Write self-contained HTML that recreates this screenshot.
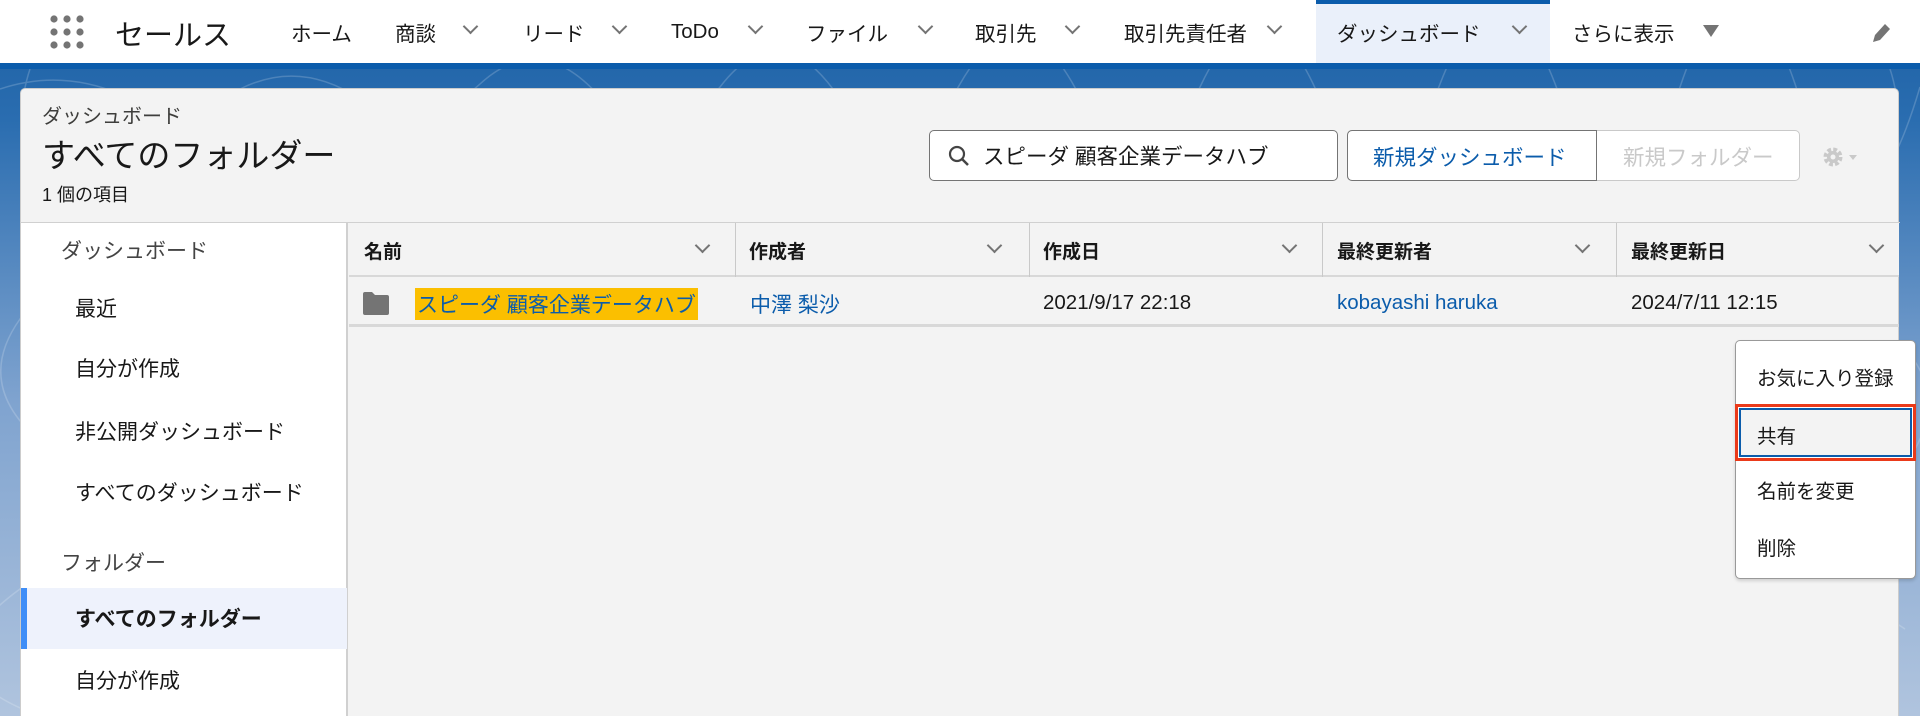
<!DOCTYPE html>
<html style="width:1920px;height:716px;overflow:hidden"><head><meta charset="utf-8"><style>
*{margin:0;padding:0;box-sizing:border-box}
body{width:1920px;height:716px;overflow:hidden;position:relative;font-family:"Liberation Sans","Noto Sans CJK JP",sans-serif;color:#181818;background:linear-gradient(180deg,#1b5fa3 0px,#2a6db0 120px,#7fa3cf 400px,#b0c4de 716px)}
.a{position:absolute;white-space:nowrap}
#nav{position:absolute;left:0;top:0;width:1920px;background:#fff;border-bottom:6px solid #0b5cab;height:69px}
.ni{font-size:20.5px;top:17px;color:#181818}
.chev{position:absolute;width:11px;height:11px;border-right:2px solid #747474;border-bottom:2px solid #747474;transform:rotate(45deg)}
#panel{position:absolute;left:20px;top:88px;width:1879px;height:628px;background:#f3f3f3;border-radius:5px 5px 0 0;border:1px solid #ccc;border-bottom:none}
.side{font-size:21px}
.th{font-size:19px;font-weight:bold;top:237px}
.td{font-size:20.5px;top:291px}
.blue{color:#0b5cab}
.mi{font-size:19.5px;left:1757px}
</style></head><body>
<svg class="a" style="left:0;top:69px" width="1920" height="647" opacity="0.18"><g fill="none" stroke="#fff" stroke-width="1.5">
<path d="M0 20 Q60 0 120 25 T240 20 T360 30 T480 15 T600 28 T720 18 T840 30 T960 15 T1080 28 T1200 18 T1320 30 T1440 15 T1560 28 T1680 18 T1800 30 T1920 18"/>
<path d="M30 0 Q10 60 40 120 T20 250 T50 380 T20 520 T40 647"/>
<path d="M1890 0 Q1910 60 1880 140 T1905 280 T1885 420 T1905 560"/>
</g></svg>
<div id="nav"></div>
<svg class="a" style="left:49px;top:14px" width="38" height="38"><g fill="#747474"><circle cx="5" cy="5" r="3.6"/><circle cx="18" cy="5" r="3.6"/><circle cx="31" cy="5" r="3.6"/><circle cx="5" cy="18" r="3.6"/><circle cx="18" cy="18" r="3.6"/><circle cx="31" cy="18" r="3.6"/><circle cx="5" cy="31" r="3.6"/><circle cx="18" cy="31" r="3.6"/><circle cx="31" cy="31" r="3.6"/></g></svg>
<div class="a" style="left:115px;top:12px;font-size:29px">セールス</div>
<div class="a" style="left:1316px;top:0;width:234px;height:63px;background:#eaf0fa;border-top:4px solid #0b5cab"></div>
<div class="a ni" style="left:291px">ホーム</div>
<div class="a ni" style="left:395px">商談</div><div class="chev" style="left:465px;top:21px"></div>
<div class="a ni" style="left:523px">リード</div><div class="chev" style="left:614px;top:21px"></div>
<div class="a ni" style="left:671px;top:20px">ToDo</div><div class="chev" style="left:750px;top:21px"></div>
<div class="a ni" style="left:806px">ファイル</div><div class="chev" style="left:920px;top:21px"></div>
<div class="a ni" style="left:975px">取引先</div><div class="chev" style="left:1067px;top:21px"></div>
<div class="a ni" style="left:1124px">取引先責任者</div><div class="chev" style="left:1269px;top:21px"></div>
<div class="a ni" style="left:1337px">ダッシュボード</div><div class="chev" style="left:1514px;top:21px"></div>
<div class="a ni" style="left:1572px">さらに表示</div>
<svg class="a" style="left:1703px;top:25px" width="16" height="12"><path d="M0 0H16L8 12Z" fill="#747474"/></svg>
<svg class="a" style="left:1870px;top:21px" width="22" height="24"><path d="M3 21L5 14L15 3L20 8L10 19Z" fill="#747474"/></svg>

<div id="panel"></div>
<div class="a" style="left:42px;top:100px;font-size:20px;color:#3e3e3c">ダッシュボード</div>
<div class="a" style="left:42px;top:129px;font-size:33px">すべてのフォルダー</div>
<div class="a" style="left:42px;top:181px;font-size:18px">1 個の項目</div>
<div class="a" style="left:929px;top:130px;width:409px;height:51px;background:#fff;border:1px solid #747474;border-radius:5px"></div>
<svg class="a" style="left:948px;top:145px" width="22" height="22"><circle cx="9" cy="9" r="7" fill="none" stroke="#444" stroke-width="2.2"/><path d="M14 14L20 20" stroke="#444" stroke-width="2.5"/></svg>
<div class="a" style="left:983px;top:140px;font-size:21.5px">スピーダ 顧客企業データハブ</div>
<div class="a" style="left:1347px;top:130px;width:453px;height:51px;background:#fff;border:1px solid #c9c9c9;border-radius:5px"></div>
<div class="a" style="left:1347px;top:130px;width:250px;height:51px;border:1px solid #747474;border-radius:5px 0 0 5px"></div>
<div class="a" style="left:1373px;top:141px;font-size:21.5px;color:#0b5cab">新規ダッシュボード</div>
<div class="a" style="left:1623px;top:141px;font-size:21.5px;color:#c9c9c9">新規フォルダー</div>
<svg class="a" style="left:1822px;top:146px" width="38" height="22"><circle cx="11" cy="11" r="7" fill="none" stroke="#c9c9c9" stroke-width="5" stroke-dasharray="3.5 2"/><circle cx="11" cy="11" r="6" fill="#c9c9c9"/><circle cx="11" cy="11" r="2.5" fill="#f3f3f3"/><path d="M27 9H35L31 14Z" fill="#c9c9c9"/></svg>

<div class="a" style="left:20px;top:222px;width:1880px;height:1px;background:#d0d0d0"></div>
<div class="a" style="left:21px;top:223px;width:327px;height:493px;background:#fff;border-right:2px solid #d0d0d0"></div>
<div class="a side" style="left:61px;top:235px;color:#444">ダッシュボード</div>
<div class="a side" style="left:75px;top:293px">最近</div>
<div class="a side" style="left:75px;top:353px">自分が作成</div>
<div class="a side" style="left:75px;top:416px">非公開ダッシュボード</div>
<div class="a side" style="left:75px;top:477px">すべてのダッシュボード</div>
<div class="a side" style="left:61px;top:547px;color:#444">フォルダー</div>
<div class="a" style="left:21px;top:588px;width:326px;height:61px;background:#eef2fc;border-left:6px solid #3f8ef7"></div>
<div class="a side" style="left:75px;top:603px;font-weight:bold">すべてのフォルダー</div>
<div class="a side" style="left:75px;top:665px">自分が作成</div>

<div class="a" style="left:349px;top:223px;width:1550px;height:54px;background:#f3f3f3;border-bottom:2px solid #d8d8d8"></div>
<div class="a" style="left:735px;top:223px;width:1px;height:54px;background:#c9c9c9"></div>
<div class="a" style="left:1029px;top:223px;width:1px;height:54px;background:#c9c9c9"></div>
<div class="a" style="left:1322px;top:223px;width:1px;height:54px;background:#c9c9c9"></div>
<div class="a" style="left:1616px;top:223px;width:1px;height:54px;background:#c9c9c9"></div>
<div class="a th" style="left:364px">名前</div><div class="chev" style="left:697px;top:240px"></div>
<div class="a th" style="left:749px">作成者</div><div class="chev" style="left:989px;top:240px"></div>
<div class="a th" style="left:1043px">作成日</div><div class="chev" style="left:1284px;top:240px"></div>
<div class="a th" style="left:1337px">最終更新者</div><div class="chev" style="left:1577px;top:240px"></div>
<div class="a th" style="left:1631px">最終更新日</div><div class="chev" style="left:1871px;top:240px"></div>
<div class="a" style="left:349px;top:324px;width:1550px;height:3px;background:#d8d8d8"></div>
<svg class="a" style="left:363px;top:292px" width="26" height="23"><path d="M0 2Q0 0 2 0H9L12 3H24Q26 3 26 5V21Q26 23 24 23H2Q0 23 0 21Z" fill="#747474"/></svg>
<div class="a blue" style="left:415px;top:288px;font-size:21px;background:#fbbf00;padding:1px 2px">スピーダ 顧客企業データハブ</div>
<div class="a td blue" style="left:750px;top:289px;font-size:21px">中澤 梨沙</div>
<div class="a td" style="left:1043px">2021/9/17 22:18</div>
<div class="a td blue" style="left:1337px">kobayashi haruka</div>
<div class="a td" style="left:1631px">2024/7/11 12:15</div>

<div class="a" style="left:1735px;top:340px;width:181px;height:239px;background:#fff;border:1px solid #999;border-radius:5px;box-shadow:0 2px 3px rgba(0,0,0,.15)"></div>
<div class="a mi" style="top:362px">お気に入り登録</div>
<div class="a" style="left:1735px;top:404px;width:181px;height:57px;border:3px solid #ea3a1a"></div>
<div class="a" style="left:1739px;top:408px;width:173px;height:49px;border:2px solid #0b5cab;background:#f3f3f3"></div>
<div class="a mi" style="top:420px">共有</div>
<div class="a mi" style="top:475px">名前を変更</div>
<div class="a mi" style="top:532px">削除</div>
</body></html>
